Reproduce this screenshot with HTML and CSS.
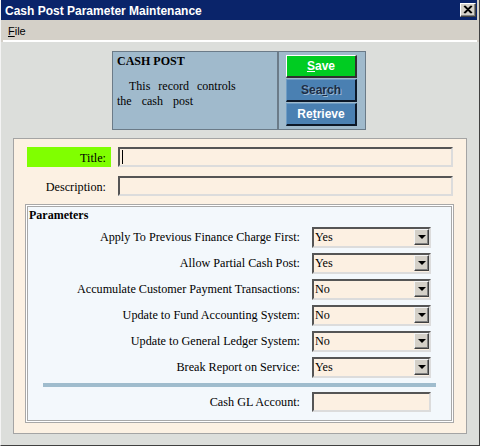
FILE: index.html
```html
<!DOCTYPE html>
<html>
<head>
<meta charset="utf-8">
<link rel="stylesheet" href="styles.css">
</head>
<body>
<div class="window">
  <div class="titlebar">
    <span class="title">Cash Post Parameter Maintenance</span>
    <span class="close"><svg width="14" height="12" viewBox="0 0 14 12"><path d="M3 2 L10 9 M4 2 L11 9 M10 2 L3 9 M11 2 L4 9" stroke="#000" stroke-width="1.2" fill="none"/></svg></span>
  </div>
  <div class="menubar"><span class="menu"><u>F</u>ile</span></div>
  <div class="menusep"></div>
  <div class="content">
    <div class="header">
      <div class="info">
        <div class="info-title">CASH POST</div>
        <div class="l1">This record controls</div>
        <div class="l2">the cash post</div>
      </div>
      <div class="buttons">
        <div class="btn save"><u>S</u>ave</div>
        <div class="btn search">Sea<u>r</u>ch</div>
        <div class="btn retrieve">Re<u>t</u>rieve</div>
      </div>
    </div>
    <div class="form">
      <div class="fields">
        <div class="lbl req">Title:</div>
        <div class="input wide"><span class="caret"></span></div>
        <div class="lbl">Description:</div>
        <div class="input wide"></div>
      </div>
      <div class="group">
        <div class="group-title">Parameters</div>
        <div class="params">
          <div class="plbl">Apply To Previous Finance Charge First:</div>
          <div class="select"><span class="val">Yes</span><span class="dd"><span class="tri"></span></span></div>
          <div class="plbl">Allow Partial Cash Post:</div>
          <div class="select"><span class="val">Yes</span><span class="dd"><span class="tri"></span></span></div>
          <div class="plbl">Accumulate Customer Payment Transactions:</div>
          <div class="select"><span class="val">No</span><span class="dd"><span class="tri"></span></span></div>
          <div class="plbl">Update to Fund Accounting System:</div>
          <div class="select"><span class="val">No</span><span class="dd"><span class="tri"></span></span></div>
          <div class="plbl">Update to General Ledger System:</div>
          <div class="select"><span class="val">No</span><span class="dd"><span class="tri"></span></span></div>
          <div class="plbl">Break Report on Service:</div>
          <div class="select"><span class="val">Yes</span><span class="dd"><span class="tri"></span></span></div>
        </div>
        <div class="sep"></div>
        <div class="params last">
          <div class="plbl">Cash GL Account:</div>
          <div class="input small"></div>
        </div>
      </div>
    </div>
  </div>
</div>
</body>
</html>
```
FILE: styles.css
```css
* { box-sizing: border-box; }
html, body { margin: 0; padding: 0; }
body { width: 480px; height: 446px; overflow: hidden; background: #d4d0c8; }

.window {
  width: 480px;
  height: 446px;
  display: flex;
  flex-direction: column;
  background: #d4d0c8;
  border-left: 1px solid #f4f4f4;
  border-right: 1px solid #404040;
  border-bottom: 1px solid #404040;
}

.titlebar {
  height: 20px;
  margin-right: 2px;
  background: #0a246a;
  display: flex;
  align-items: center;
  justify-content: space-between;
  padding: 0 1px 0 4px;
}
.title {
  font-family: "Liberation Sans", Arial, sans-serif;
  font-weight: bold;
  font-size: 12px;
  color: #fff;
  line-height: 20px;
  padding-top: 1px;
}
.close {
  width: 16px;
  height: 14px;
  background: #d4d0c8;
  border-top: 1px solid #fff;
  border-left: 1px solid #fff;
  border-right: 1px solid #404040;
  border-bottom: 1px solid #404040;
  box-shadow: inset -1px -1px 0 #808080;
  display: flex;
  align-items: center;
  justify-content: center;
}
.close svg { display: block; }

.menubar {
  height: 20px;
  background: #d4d0c8;
  padding-left: 7px;
  display: flex;
  align-items: center;
}
.menu {
  font-family: "Liberation Sans", Arial, sans-serif;
  font-size: 11px;
  color: #000;
  padding-top: 1px;
}
.menusep {
  height: 2px;
  margin: 0 2px;
  background: #fff;
}

.content {
  flex: 1;
  background: #dcdedb;
  padding-top: 9px;
}

.header {
  width: 254px;
  height: 79px;
  margin-left: 111px;
  border: 1px solid #6b7b88;
  background: #a0bacc;
  display: flex;
}
.info {
  width: 166px;
  flex: none;
  border-right: 2px solid #6b7b88;
  padding: 2px 0 0 4px;
  font-family: "Liberation Serif", "Times New Roman", serif;
  font-size: 12px;
  color: #000;
  line-height: 15px;
}
.info-title { font-weight: bold; }
.l1 { margin-top: 10px; padding-left: 12px; word-spacing: 5px; }
.l2 { word-spacing: 7px; }

.buttons {
  display: flex;
  flex-direction: column;
  gap: 1px;
  padding: 3px 0 0 7px;
}
.btn {
  width: 71px;
  height: 23px;
  font-family: "Liberation Sans", Arial, sans-serif;
  font-weight: bold;
  font-size: 12px;
  line-height: 20px;
  text-align: center;
  color: #fff;
  background: #4a80b2;
  border-top: 1px solid #6e9cc4;
  border-left: 1px solid #6e9cc4;
  border-right: 2px solid #0c1828;
  border-bottom: 2px solid #0c1828;
}
.btn.save {
  background: #00cc22;
  border-top: 1px solid #fff;
  border-left: 1px solid #fff;
  border-right: 2px solid #303030;
  border-bottom: 2px solid #303030;
}
.btn.search {
  color: #1c2c44;
  text-shadow: 1px 1px 0 #9ab8d2;
}

.form {
  width: 454px;
  height: 296px;
  margin: 8px 0 0 12px;
  border: 1px solid #a4a4a4;
  background: #fcf1e3;
  padding-top: 8px;
}

.fields {
  display: grid;
  grid-template-columns: 84px 335px;
  grid-auto-rows: 20px;
  column-gap: 7px;
  row-gap: 9px;
  margin-left: 13px;
}
.lbl {
  font-family: "Liberation Serif", "Times New Roman", serif;
  font-size: 12.2px;
  color: #000;
  text-align: right;
  padding-right: 5px;
  line-height: 20px;
  padding-top: 1px;
}
.lbl.req { background: #80ff00; }

.input {
  height: 20px;
  background: #fcf0e2;
  border-top: 2px solid #555;
  border-left: 2px solid #555;
  border-right: 2px solid #dcdcdc;
  border-bottom: 2px solid #dcdcdc;
  position: relative;
}
.caret {
  position: absolute;
  left: 2px;
  top: 1px;
  width: 1px;
  height: 14px;
  background: #000;
}

.group {
  width: 429px;
  margin: 8px 0 0 11px;
  border: 1px solid #a8a8a8;
  box-shadow: inset 0 0 0 1px #fff, inset 0 0 0 2px #a8a8a8;
  background: #f3f8fc;
  padding: 3px 0 10px 3px;
}
.group-title {
  font-family: "Liberation Serif", "Times New Roman", serif;
  font-weight: bold;
  font-size: 12px;
  line-height: 14px;
  color: #000;
}

.params {
  display: grid;
  grid-template-columns: 271px 119px;
  grid-auto-rows: 21px;
  column-gap: 12px;
  row-gap: 5px;
  margin-top: 5px;
}
.params.last { grid-auto-rows: 20px; }
.plbl {
  font-family: "Liberation Serif", "Times New Roman", serif;
  font-size: 12.2px;
  color: #000;
  text-align: right;
  line-height: 21px;
  white-space: nowrap;
}

.select {
  height: 21px;
  background: #fcf0e2;
  border-top: 2px solid #555;
  border-left: 2px solid #555;
  border-right: 2px solid #dcdcdc;
  border-bottom: 2px solid #dcdcdc;
  display: flex;
  justify-content: space-between;
}
.val {
  font-family: "Liberation Serif", "Times New Roman", serif;
  font-size: 12.2px;
  color: #000;
  line-height: 17px;
  padding-left: 1px;
}
.dd {
  width: 15px;
  height: 16px;
  background: #d4d0c8;
  border-top: 1px solid #f4f4f4;
  border-left: 1px solid #f4f4f4;
  border-right: 1px solid #404040;
  border-bottom: 1px solid #404040;
  box-shadow: inset -1px -1px 0 #808080;
  display: flex;
  align-items: center;
  justify-content: center;
}
.tri {
  width: 0;
  height: 0;
  border-left: 4px solid transparent;
  border-right: 4px solid transparent;
  border-top: 4px solid #000;
}

.sep {
  height: 4px;
  width: 393px;
  margin: 5px 0 0 14px;
  background: #9fbccd;
}
.input.small { height: 20px; }
```
